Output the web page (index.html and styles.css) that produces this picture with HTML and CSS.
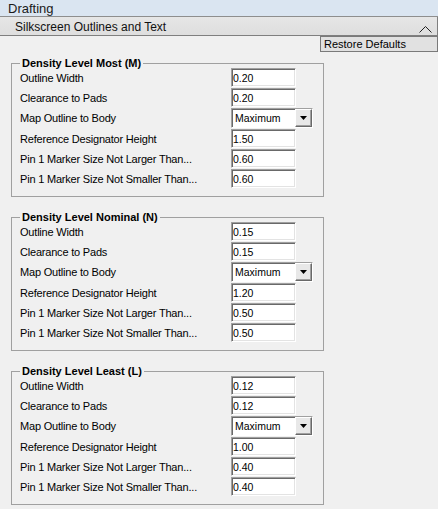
FILE: index.html
```html
<!DOCTYPE html>
<html>
<head>
<meta charset="utf-8">
<link rel="stylesheet" href="styles.css">
</head>
<body>
<div class="titlebar">Drafting</div>
<div class="section-head">
  <span class="section-title">Silkscreen Outlines and Text</span>
  <svg class="chevron" width="13" height="8" viewBox="0 0 13 8"><polyline points="0.5,7.5 6.5,1.5 12.5,7.5" fill="none" stroke="#222" stroke-width="1"/></svg>
</div>
<div class="actions"><button class="restore">Restore Defaults</button></div>

<fieldset class="group">
  <legend>Density Level Most (M)</legend>
  <div class="rows">
    <span class="label">Outline Width</span><input class="field" type="text" value="0.20" readonly>
    <span class="label">Clearance to Pads</span><input class="field" type="text" value="0.20" readonly>
    <span class="label">Map Outline to Body</span><div class="combo"><span class="combo-text">Maximum</span><span class="combo-btn"><svg width="7" height="4" viewBox="0 0 7 4"><polygon points="0,0 7,0 3.5,4" fill="#000"/></svg></span></div>
    <span class="label">Reference Designator Height</span><input class="field" type="text" value="1.50" readonly>
    <span class="label">Pin 1 Marker Size Not Larger Than...</span><input class="field" type="text" value="0.60" readonly>
    <span class="label">Pin 1 Marker Size Not Smaller Than...</span><input class="field" type="text" value="0.60" readonly>
  </div>
</fieldset>

<fieldset class="group">
  <legend>Density Level Nominal (N)</legend>
  <div class="rows">
    <span class="label">Outline Width</span><input class="field" type="text" value="0.15" readonly>
    <span class="label">Clearance to Pads</span><input class="field" type="text" value="0.15" readonly>
    <span class="label">Map Outline to Body</span><div class="combo"><span class="combo-text">Maximum</span><span class="combo-btn"><svg width="7" height="4" viewBox="0 0 7 4"><polygon points="0,0 7,0 3.5,4" fill="#000"/></svg></span></div>
    <span class="label">Reference Designator Height</span><input class="field" type="text" value="1.20" readonly>
    <span class="label">Pin 1 Marker Size Not Larger Than...</span><input class="field" type="text" value="0.50" readonly>
    <span class="label">Pin 1 Marker Size Not Smaller Than...</span><input class="field" type="text" value="0.50" readonly>
  </div>
</fieldset>

<fieldset class="group">
  <legend>Density Level Least (L)</legend>
  <div class="rows">
    <span class="label">Outline Width</span><input class="field" type="text" value="0.12" readonly>
    <span class="label">Clearance to Pads</span><input class="field" type="text" value="0.12" readonly>
    <span class="label">Map Outline to Body</span><div class="combo"><span class="combo-text">Maximum</span><span class="combo-btn"><svg width="7" height="4" viewBox="0 0 7 4"><polygon points="0,0 7,0 3.5,4" fill="#000"/></svg></span></div>
    <span class="label">Reference Designator Height</span><input class="field" type="text" value="1.00" readonly>
    <span class="label">Pin 1 Marker Size Not Larger Than...</span><input class="field" type="text" value="0.40" readonly>
    <span class="label">Pin 1 Marker Size Not Smaller Than...</span><input class="field" type="text" value="0.40" readonly>
  </div>
</fieldset>
</body>
</html>
```

FILE: styles.css
```css
html, body {
  margin: 0;
  padding: 0;
}
body {
  width: 438px;
  height: 509px;
  background: #f0f0f0;
  font-family: "Liberation Sans", Arial, sans-serif;
  color: #000;
  overflow: hidden;
}

.titlebar {
  box-sizing: border-box;
  height: 17px;
  padding: 2px 0 0 8px;
  line-height: 14px;
  font-size: 13px;
  color: #1a1a1a;
  background: #dae5f1;
  border-bottom: 1px solid #8e8e8e;
}

.section-head {
  box-sizing: border-box;
  height: 19px;
  padding: 2px 5px 0 15px;
  display: flex;
  justify-content: space-between;
  align-items: flex-start;
  background: linear-gradient(#e6e6e6, #dedede);
  border-bottom: 1px solid #7f7f7f;
  border-right: 1px solid #7f7f7f;
}
.section-title {
  font-size: 12px;
  line-height: 16px;
  color: #111;
}
.chevron {
  display: block;
  margin-top: 6px;
}

.actions {
  display: flex;
  justify-content: flex-end;
}
.restore {
  box-sizing: border-box;
  width: 118px;
  height: 16px;
  margin: 0;
  padding: 0 0 0 3px;
  border: 1px solid #7a7a7a;
  background: #e1e1e1;
  font-family: "Liberation Sans", Arial, sans-serif;
  font-size: 11px;
  line-height: 14px;
  text-align: left;
  color: #000;
}

.group {
  box-sizing: border-box;
  width: 313px;
  margin: 6px 0 0 11px;
  padding: 0 0 8px 8px;
  border: 1px solid #a0a0a0;
  min-width: 0;
}
.group + .group {
  margin-top: 15px;
}
.group legend {
  padding: 0 2px;
  margin: 0;
  font-size: 11px;
  font-weight: bold;
  line-height: 10px;
  color: #000;
}

.rows {
  display: grid;
  grid-template-columns: 211px 82px;
  row-gap: 1px;
  align-items: center;
}
.label {
  font-size: 11px;
  letter-spacing: -0.2px;
  line-height: 14px;
  white-space: nowrap;
  color: #000;
}

.field {
  box-sizing: border-box;
  width: 65px;
  height: 19px;
  margin: 0;
  padding: 0 0 0 1px;
  border: 1px solid;
  border-color: #a0a0a0 #ffffff #ffffff #a0a0a0;
  box-shadow: inset 1px 1px 0 #696969, inset -1px -1px 0 #e3e3e3;
  background: #fff;
  font-family: "Liberation Sans", Arial, sans-serif;
  font-size: 10.5px;
  color: #000;
  outline: none;
}

.combo {
  box-sizing: border-box;
  width: 82px;
  height: 20px;
  display: flex;
  border: 1px solid;
  border-color: #a0a0a0 #ffffff #ffffff #a0a0a0;
  box-shadow: inset 1px 1px 0 #696969;
  background: #fff;
}
.combo-text {
  flex: 1;
  padding-left: 3px;
  padding-top: 1px;
  font-size: 10.5px;
  line-height: 16px;
  color: #000;
}
.combo-btn {
  box-sizing: border-box;
  width: 17px;
  display: flex;
  align-items: center;
  justify-content: center;
  background: #e8e8e8;
  border: 1px solid;
  border-color: #ffffff #696969 #696969 #ffffff;
  box-shadow: inset -1px -1px 0 #a0a0a0;
}
.combo-btn svg {
  display: block;
}
```
